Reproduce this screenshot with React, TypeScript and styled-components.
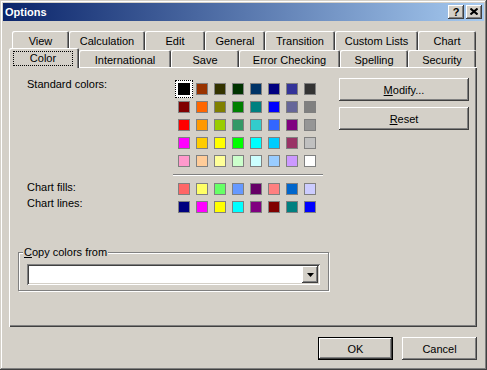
import React from 'react';
import styled, { createGlobalStyle, css } from 'styled-components';

const GlobalStyle = createGlobalStyle`
    html, body {
        margin: 0;
        padding: 0;
        background: #d4d0c8;
    }
    body {
        font-family: "Liberation Sans", Arial, sans-serif;
        font-size: 11px;
        color: #000;
    }
    * {
        box-sizing: border-box;
    }
`;

const raised = css`
    box-shadow: inset -1px -1px #404040, inset 1px 1px #fff, inset -2px -2px #808080, inset 2px 2px #d4d0c8;
`;

const standardColors = [
    '#000000', '#993300', '#333300', '#003300', '#003366', '#000080', '#333399', '#333333',
    '#800000', '#ff6600', '#808000', '#008000', '#008080', '#0000ff', '#666699', '#808080',
    '#ff0000', '#ff9900', '#99cc00', '#339966', '#33cccc', '#3366ff', '#800080', '#969696',
    '#ff00ff', '#ffcc00', '#ffff00', '#00ff00', '#00ffff', '#00ccff', '#993366', '#c0c0c0',
    '#ff99cc', '#ffcc99', '#ffff99', '#ccffcc', '#ccffff', '#99ccff', '#cc99ff', '#ffffff',
];
const chartColors = [
    '#ff6666', '#ffff66', '#66ff66', '#6699ff', '#660066', '#ff8080', '#0066cc', '#ccccff',
    '#000080', '#ff00ff', '#ffff00', '#00ffff', '#800080', '#800000', '#008080', '#0000ff',
];

const backTabs = [
    { label: 'View', w: 57 },
    { label: 'Calculation', w: 76 },
    { label: 'Edit', w: 60 },
    { label: 'General', w: 60 },
    { label: 'Transition', w: 70 },
    { label: 'Custom Lists', w: 83 },
    { label: 'Chart', w: 58 },
];
const frontTabs = [
    { label: 'International', w: 92 },
    { label: 'Save', w: 68 },
    { label: 'Error Checking', w: 101 },
    { label: 'Spelling', w: 68 },
    { label: 'Security', w: 68 },
];

const App = () => {
    return (
        <>
            <GlobalStyle />
            <Window>
                <TitleBar>
                    <TitleText>Options</TitleText>
                    <CaptionButtons>
                        <CaptionBtn>?</CaptionBtn>
                        <CaptionBtn>
                            <svg width="8" height="7" viewBox="0 0 8 7">
                                <path d="M0.5 0.5 L7.5 6.5 M7.5 0.5 L0.5 6.5" stroke="#000" strokeWidth="2" />
                            </svg>
                        </CaptionBtn>
                    </CaptionButtons>
                </TitleBar>

                <Content>
                    <BackRow>
                        {backTabs.map((t) => (
                            <Tab key={t.label} $w={t.w}>{t.label}</Tab>
                        ))}
                    </BackRow>
                    <FrontRow>
                        <SelectedTab $w={70}>
                            <FocusBox>Color</FocusBox>
                        </SelectedTab>
                        {frontTabs.map((t) => (
                            <Tab key={t.label} $w={t.w} $front>{t.label}</Tab>
                        ))}
                    </FrontRow>

                    <Panel>
                        <MainRow>
                            <LabelCol>
                                <Label>Standard colors:</Label>
                                <Label $top={90}>Chart fills:</Label>
                                <Label $top={3}>Chart lines:</Label>
                            </LabelCol>
                            <PaletteCol>
                                <SwatchGrid>
                                    {standardColors.map((c, i) => (
                                        <Cell key={i} $selected={i === 0}>
                                            <Swatch $color={c} $selected={i === 0} />
                                        </Cell>
                                    ))}
                                </SwatchGrid>
                                <Separator />
                                <SwatchGrid>
                                    {chartColors.map((c, i) => (
                                        <Cell key={i}>
                                            <Swatch $color={c} />
                                        </Cell>
                                    ))}
                                </SwatchGrid>
                            </PaletteCol>
                            <ButtonCol>
                                <PushButton $w={130}><u>M</u>odify...</PushButton>
                                <PushButton $w={130}><u>R</u>eset</PushButton>
                            </ButtonCol>
                        </MainRow>

                        <GroupBox>
                            <GroupLegend><u>C</u>opy colors from</GroupLegend>
                            <Combo>
                                <ComboField />
                                <ComboArrow>
                                    <svg width="7" height="4" viewBox="0 0 7 4">
                                        <polygon points="0,0 7,0 3.5,4" fill="#000" />
                                    </svg>
                                </ComboArrow>
                            </Combo>
                        </GroupBox>
                    </Panel>

                    <DialogButtons>
                        <PushButton $w={75} $default>OK</PushButton>
                        <PushButton $w={75}>Cancel</PushButton>
                    </DialogButtons>
                </Content>
            </Window>
        </>
    );
};

const Window = styled.div`
    width: 487px;
    height: 370px;
    padding: 3px;
    background: #d4d0c8;
    box-shadow: inset -1px -1px #404040, inset 1px 1px #d4d0c8, inset -2px -2px #808080, inset 2px 2px #fff;
    display: flex;
    flex-direction: column;
`;

const TitleBar = styled.div`
    height: 18px;
    display: flex;
    align-items: center;
    justify-content: space-between;
    padding: 0 2px 0 2px;
    background: linear-gradient(to right, #0a246a, #a6caf0);
`;

const TitleText = styled.div`
    color: #fff;
    font-weight: bold;
    font-size: 11px;
`;

const CaptionButtons = styled.div`
    display: flex;
    gap: 2px;
`;

const CaptionBtn = styled.div`
    width: 16px;
    height: 14px;
    background: #d4d0c8;
    ${raised};
    display: flex;
    align-items: center;
    justify-content: center;
    font-weight: bold;
    font-size: 11px;
    line-height: 14px;
    padding-bottom: 1px;
`;

const Content = styled.div`
    flex: 1;
    display: flex;
    flex-direction: column;
    padding: 10px 7px 0 6px;
`;

const BackRow = styled.div`
    display: flex;
    height: 19px;
    margin-left: 3px;
`;

const FrontRow = styled.div`
    display: flex;
    height: 19px;
    margin-top: -2px;
    position: relative;
    z-index: 1;
`;

const tabBase = css`
    background: #d4d0c8;
    border-radius: 2px 2px 0 0;
    box-shadow: inset 1px 1px 0 #fff, inset -1px 0 0 #404040, inset -2px 0 0 #808080;
    text-align: center;
    line-height: 13px;
    white-space: nowrap;
`;

const Tab = styled.div<{ $w: number; $front?: boolean }>`
    ${tabBase};
    width: ${(p) => p.$w}px;
    height: ${(p) => (p.$front ? 17 : 19)}px;
    margin-top: ${(p) => (p.$front ? 2 : 0)}px;
    padding-top: 4px;
`;

const SelectedTab = styled.div<{ $w: number }>`
    ${tabBase};
    width: ${(p) => p.$w}px;
    height: 20px;
    padding: 3px 6px 0 4px;
    position: relative;
    z-index: 2;
`;

const FocusBox = styled.div`
    border: 1px dotted #000;
    height: 15px;
    line-height: 13px;
    text-align: center;
`;

const Panel = styled.div`
    width: 468px;
    height: 260px;
    padding: 11px 0 0 9px;
    background: #d4d0c8;
    box-shadow: inset 1px 1px 0 #fff, inset -1px -1px 0 #404040, inset -2px -2px 0 #808080;
    display: flex;
    flex-direction: column;
`;

const MainRow = styled.div`
    display: flex;
    align-items: flex-start;
`;

const LabelCol = styled.div`
    width: 155px;
    padding-left: 9px;
    display: flex;
    flex-direction: column;
`;

const Label = styled.div<{ $top?: number }>`
    line-height: 13px;
    margin-top: ${(p) => p.$top || 0}px;
`;

const PaletteCol = styled.div`
    width: 150px;
    padding: 2px 0 0 2px;
`;

const SwatchGrid = styled.div`
    display: grid;
    grid-template-columns: repeat(8, 18px);
    grid-auto-rows: 18px;
`;

const Cell = styled.div<{ $selected?: boolean }>`
    width: 18px;
    height: 18px;
    display: flex;
    align-items: center;
    justify-content: center;
    ${(p) =>
        p.$selected &&
        css`
            background: #fff;
            outline: 1px dotted #000;
            outline-offset: -1px;
        `}
`;

const Swatch = styled.div<{ $color: string; $selected?: boolean }>`
    width: 12px;
    height: 12px;
    background: ${(p) => p.$color};
    border: 1px solid ${(p) => (p.$selected ? '#000' : '#808080')};
`;

const Separator = styled.div`
    width: 150px;
    height: 2px;
    margin: 4px 0 4px -2px;
    border-top: 1px solid #808080;
    border-bottom: 1px solid #fff;
`;

const ButtonCol = styled.div`
    margin-left: 16px;
    display: flex;
    flex-direction: column;
    gap: 6px;
`;

const PushButton = styled.div<{ $w: number; $default?: boolean }>`
    width: ${(p) => p.$w}px;
    height: 23px;
    display: flex;
    align-items: center;
    justify-content: center;
    background: #d4d0c8;
    ${(p) =>
        p.$default
            ? css`
                  border: 1px solid #000;
                  box-shadow: inset -1px -1px #404040, inset 1px 1px #fff, inset -2px -2px #808080;
              `
            : raised};
`;

const GroupBox = styled.div`
    position: relative;
    width: 311px;
    height: 39px;
    margin-top: 36px;
    border: 1px solid #808080;
    box-shadow: inset 1px 1px 0 #fff, 1px 1px 0 #fff;
    padding: 11px 0 0 8px;
`;

const GroupLegend = styled.div`
    position: absolute;
    top: -7px;
    left: 4px;
    padding: 0 1px;
    line-height: 13px;
    background: #d4d0c8;
`;

const Combo = styled.div`
    width: 293px;
    height: 21px;
    background: #fff;
    padding: 2px;
    display: flex;
    box-shadow: inset 1px 1px #808080, inset -1px -1px #fff, inset 2px 2px #404040, inset -2px -2px #d4d0c8;
`;

const ComboField = styled.div`
    flex: 1;
`;

const ComboArrow = styled.div`
    width: 16px;
    height: 17px;
    background: #d4d0c8;
    ${raised};
    display: flex;
    align-items: center;
    justify-content: center;
`;

const DialogButtons = styled.div`
    display: flex;
    justify-content: flex-end;
    gap: 9px;
    margin-top: 10px;
    width: 468px;
`;

export default App;
